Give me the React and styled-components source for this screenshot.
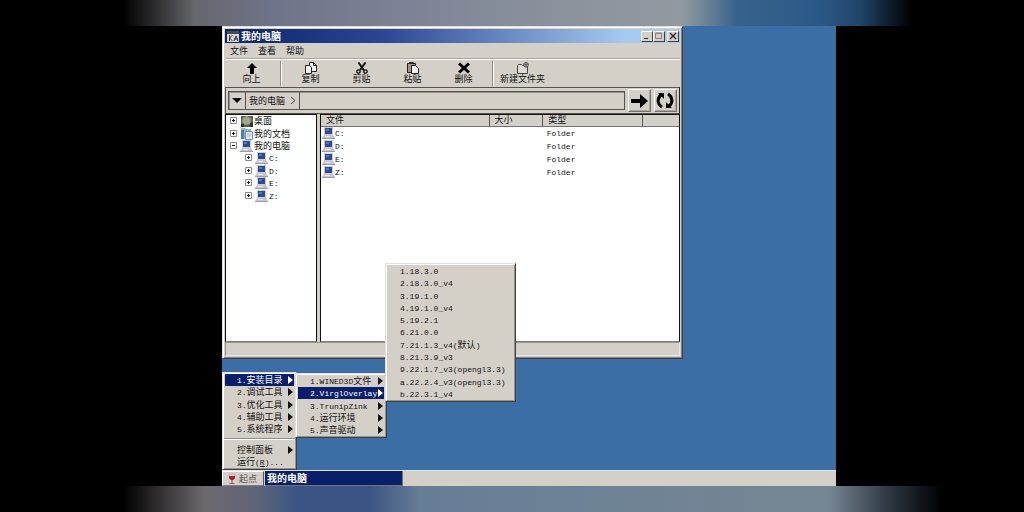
import React, { useState } from "react";
import styled, { createGlobalStyle } from "styled-components";

const GlobalStyle = createGlobalStyle`
  * {
    box-sizing: border-box;
  }
  body {
    margin: 0;
    background: #000;
    font-family: "Noto Sans CJK SC", sans-serif;
    font-size: 9px;
    line-height: 12px;
    color: #111;
  }
  button, input {
    font: inherit;
    color: inherit;
    margin: 0;
    padding: 0;
    border: 0;
    background: none;
    border-radius: 0;
  }
  svg {
    display: block;
    flex: none;
  }
`;

const face = "#d4d0c8";
const navy = "#0a1f6b";

const Page = styled.div`
  min-height: 100vh;
  display: grid;
  grid-template-rows: 26px 1fr 26px;
`;

const Band = styled.div`
  background: linear-gradient(90deg, ${(props) => props.$stops});
`;

const Stage = styled.div`
  display: grid;
  grid-template-columns: 222px 1fr 188px;
`;

const Desktop = styled.main`
  grid-column: 2;
  position: relative;
  background: #3a6ea5;
  display: flex;
  flex-direction: column;
  align-items: flex-start;
  justify-content: space-between;
`;

const Window = styled.section`
  width: 75%;
  min-height: 333px;
  display: flex;
  flex-direction: column;
  background: ${face};
  border: 1px solid;
  border-color: #e4e0d8 #404040 #404040 #e4e0d8;
  box-shadow: inset 1px 1px #fff, inset -1px -1px #808080;
  padding: 2px;
`;

const TitleBar = styled.header`
  height: 14px;
  display: flex;
  align-items: center;
  gap: 2px;
  padding: 0 1px 0 2px;
  background: linear-gradient(90deg, #0a246a, #2b4795 35%, #a6caf0 88%);
  color: #fff;
`;

const Title = styled.h1`
  flex: 1;
  margin: 0;
  font-size: 10px;
  line-height: 14px;
  font-weight: 700;
`;

const CaptionButton = styled.button`
  width: 12px;
  height: 11px;
  display: flex;
  align-items: center;
  justify-content: center;
  background: ${face};
  border: 1px solid;
  border-color: #fff #404040 #404040 #fff;
  margin-left: ${(props) => (props.$apart ? 0 : -2)}px;
`;

const MenuBar = styled.nav`
  height: 16px;
  display: flex;
  align-items: center;
  gap: 10px;
  padding-left: 5px;
  border-bottom: 1px solid #aaa69e;
`;

const MenuBarButton = styled.button`
  line-height: 14px;
`;

const ToolBar = styled.div`
  height: 28px;
  display: flex;
  border-top: 1px solid #fff;
  padding: 1px 0 0 1px;
`;

const ToolButton = styled.button`
  width: 51px;
  display: flex;
  flex-direction: column;
  align-items: center;
  justify-content: flex-start;
  padding-top: 1px;
  line-height: 10px;
  white-space: nowrap;
`;

const ToolDivider = styled.span`
  width: 2px;
  margin: 0 3px 1px;
  border-left: 1px solid #908c84;
  border-right: 1px solid #fff;
`;

const AddressBar = styled.form`
  height: 27px;
  display: flex;
  align-items: center;
  gap: 3px;
  padding: 0 2px;
  border: 1px solid #55534e;
  border-right-color: #222;
`;

const AddressBox = styled.div`
  flex: 1;
  height: 19px;
  display: flex;
  border: 1px solid #55534e;
  box-shadow: inset 1px 1px #96928a;
`;

const AddressPart = styled.button`
  display: flex;
  align-items: center;
  gap: 5px;
  padding: 0 3px;
  border-right: 1px solid #55534e;
`;

const AddressInput = styled.input`
  flex: 1;
  min-width: 0;
  outline: none;
`;

const GoButton = styled.button`
  width: 23px;
  height: 23px;
  display: flex;
  align-items: center;
  justify-content: center;
  border: 1px solid;
  border-color: #fff #77736c #77736c #fff;
  box-shadow: inset -1px -1px #aaa69e;
`;

const Panes = styled.div`
  flex: 1;
  display: grid;
  grid-template-columns: 92px 1fr;
  gap: 3px;
`;

const Pane = styled.div`
  background: #fff;
  border: 1px solid #111;
  border-bottom-color: #808080;
`;

const Tree = styled.ul`
  list-style: none;
  margin: 0;
  padding: 0;
  height: 87px;
  display: flex;
  flex-direction: column;
`;

const TreeRow = styled.li`
  flex: 1;
  display: flex;
  align-items: center;
  gap: 2px;
  padding-left: ${(props) => (props.$depth ? 19 : 4)}px;
`;

const TreeLabel = styled.span`
  margin-left: -1px;
  white-space: nowrap;
`;

const FileTable = styled.table`
  width: 100%;
  table-layout: fixed;
  border-collapse: collapse;

  th {
    height: 11px;
    padding: 0 0 0 5px;
    line-height: 10px;
    font-weight: 400;
    text-align: left;
    background: ${face};
    border-right: 1px solid #55534e;
    border-bottom: 1px solid #77736c;
  }
  th:last-child {
    border-right: 0;
  }
  td {
    height: 13px;
    padding: 0 0 0 4px;
  }
  td:first-child {
    padding-left: 1px;
  }
`;

const FileName = styled.span`
  display: flex;
  align-items: center;
`;

const StatusBar = styled.footer`
  height: 14px;
  border: 1px solid;
  border-color: #96928a #e8e5de #e8e5de #96928a;
`;

const Latin = styled.span`
  font-family: "Liberation Mono", monospace;
  font-size: 8px;
  line-height: 0;
  white-space: pre;
`;

const Menu = styled.div`
  position: absolute;
  left: ${(props) => props.$left}px;
  bottom: ${(props) => props.$bottom}px;
  width: ${(props) => props.$width}px;
  min-height: ${(props) => props.$height}px;
  display: flex;
  flex-direction: column;
  padding: 1px;
  background: ${face};
  border: 1px solid;
  border-color: #e4e0d8 #404040 #404040 #e4e0d8;
  box-shadow: inset 1px 1px #fff, inset -1px -1px #96928a;
`;

const MenuItem = styled.button`
  flex: 1;
  display: flex;
  align-items: center;
  justify-content: space-between;
  margin: 0 1px;
  padding: 0 1px 0 12px;
  white-space: nowrap;
  text-align: left;
  background: ${(props) => (props.$active ? navy : "transparent")};
  color: ${(props) => (props.$active ? "#fff" : "#111")};
`;

const MenuDivider = styled.hr`
  width: 100%;
  height: 2px;
  margin: 3px 0;
  border: 0;
  border-top: 1px solid #908c84;
  border-bottom: 1px solid #fff;
`;

const TaskBar = styled.footer`
  width: 100%;
  height: 16px;
  display: flex;
  gap: 1px;
  background: ${face};
  border-top: 1px solid #dfe6ea;
`;

const StartButton = styled.button`
  width: 42px;
  display: flex;
  align-items: center;
  gap: 3px;
  padding-left: 5px;
  color: #55534e;
  border: 1px solid;
  border-color: #fff #55534e #808080 #fff;
`;

const TaskButton = styled.button`
  width: 138px;
  padding-left: 2px;
  text-align: left;
  font-weight: 700;
  font-size: 10px;
  color: #fff;
  background: ${navy};
  border-right: 1px solid #77736c;
  border-bottom: 1px solid #77736c;
`;

// Latin runs are set in a half-width face beside the full-width characters
function Label({ text }) {
  return (
    <span>
      {text
        .split(/([\x20-\x7e]+)/)
        .filter(Boolean)
        .map((part, i) =>
          /^[\x20-\x7e]/.test(part) ? <Latin key={i}>{part}</Latin> : part
        )}
    </span>
  );
}

function ComputerIcon() {
  return (
    <svg width="13" height="12" viewBox="0 0 13 12">
      <path d="M2 0h9v8H2z" fill="#c9ced8" />
      <path d="M3 1h7v6H3z" fill="#2f4a94" />
      <path d="M4 2h3v2H4z" fill="#5878b8" />
      <path d="M2 8h9l2 3H0z" fill="#c3c6cc" />
      <path d="M0 11h13v1H0z" fill="#9a9ea8" />
      <path d="M3 9h5v1H3z" fill="#e8eaee" />
    </svg>
  );
}

function DesktopIcon() {
  return (
    <svg width="13" height="12" viewBox="0 0 13 12">
      <path d="M1 1h12v11H1z" fill="#5d6454" />
      <path d="M3 3l4-2 4 3-1 5-5 1-3-3z" fill="#a0a884" />
      <path d="M1 9h3v3H1zM10 8h3v4h-3z" fill="#30352c" />
    </svg>
  );
}

function DocumentsIcon() {
  return (
    <svg width="13" height="12" viewBox="0 0 13 12">
      <path d="M1 0h4l1 1h5v10H1z" fill="#8fb4d8" />
      <path d="M1 2h3v9H1z" fill="#4f7fb0" />
      <path d="M5.500 3.500h7v8h-7z" fill="#dfeafa" stroke="#6a8fb8" />
      <path d="M7 6h4M7 8h4" stroke="#9db8d6" />
    </svg>
  );
}

function Expander({ open }) {
  return (
    <svg width="8" height="8" viewBox="0 0 8 8">
      <path d="M.5.5h6v6h-6z" fill="#fff" stroke="#8a8a8a" />
      <path d={open ? "M2 3.500h3" : "M2 3.500h3M3.500 2v3"} stroke="#111" />
    </svg>
  );
}

function SubmenuArrow() {
  return (
    <svg width="5" height="8" viewBox="0 0 5 8">
      <path d="M0 0l5 4-5 4z" fill="currentColor" />
    </svg>
  );
}

const toolIcons = {
  up: <path d="M6 1l5 5H8v6H4V6H1z" fill="#000" />,
  copy: (
    <g fill="#f4f2ec" stroke="#222">
      <path d="M4.500.5h4l3 3v6h-7z" />
      <path d="M.5 3.500h4l2 2v6h-6z" />
      <path d="M8.500.5v3h3" fill="none" />
    </g>
  ),
  cut: (
    <g fill="none" stroke="#111">
      <path d="M2.500.5l5.500 8M9.500.5L4 8" strokeWidth="2" />
      <circle cx="2.500" cy="9.500" r="1.700" strokeWidth="1.300" />
      <circle cx="9.500" cy="9.500" r="1.700" strokeWidth="1.300" />
    </g>
  ),
  paste: (
    <g stroke="#222">
      <path d="M.5 1.500h8v9h-8z" fill="#9c988f" />
      <path d="M2.500.5h4v1h-4z" fill="#ddd" />
      <path d="M4.500 3.500h4l3 3v5h-7z" fill="#f4f2ec" />
    </g>
  ),
  remove: <path d="M1 1.500l10 9M11 1.500l-10 9" stroke="#000" strokeWidth="3" />,
  folder: (
    <g fill="none" stroke="#444">
      <path d="M.5 11.500v-8l1-1h3l1 1h5v8z" fill="#dedad2" />
      <circle cx="9" cy="2.800" r="2.300" fill="#dedad2" />
      <path d="M9 1.300v3M7.500 2.800h3" />
    </g>
  ),
};

function ToolIcon({ name }) {
  return (
    <svg width="12" height="12" viewBox="0 0 12 12">
      {toolIcons[name]}
    </svg>
  );
}

const drives = ["C:", "D:", "E:", "Z:"];

const tree = [
  { label: "桌面", icon: <DesktopIcon /> },
  { label: "我的文档", icon: <DocumentsIcon /> },
  { label: "我的电脑", icon: <ComputerIcon />, open: true },
  ...drives.map((label) => ({ label, icon: <ComputerIcon />, depth: 1 })),
];

const startItems = [
  "1.安装目录",
  "2.调试工具",
  "3.优化工具",
  "4.辅助工具",
  "5.系统程序",
];

const folderItems = [
  "1.WINED3D文件",
  "2.VirglOverlay",
  "3.TrunipZink",
  "4.运行环境",
  "5.声音驱动",
];

const versions = [
  "1.18.3.0",
  "2.18.3.0_v4",
  "3.19.1.0",
  "4.19.1.0_v4",
  "5.19.2.1",
  "6.21.0.0",
  "7.21.1.3_v4(默认)",
  "8.21.3.9_v3",
  "9.22.1.7_v3(opengl3.3)",
  "a.22.2.4_v3(opengl3.3)",
  "b.22.3.1_v4",
];

function Explorer() {
  const [address, setAddress] = useState("");

  return (
    <Window>
      <TitleBar>
        <svg width="12" height="12" viewBox="0 0 12 12">
          <path d="M0 1h12v11H0z" fill="#d8d8d4" />
          <path d="M0 1h12v3H0z" fill="#4a4a48" />
          <path d="M2.500 5v6M2.500 8l3-3M2.500 8l3 3M7 11l2-5 2 5M7 9h4" stroke="#333" fill="none" />
        </svg>
        <Title>我的电脑</Title>
        <CaptionButton aria-label="最小化">
          <svg width="8" height="8" viewBox="0 0 8 8">
            <path d="M1 6h4v1H1z" fill="#222" />
          </svg>
        </CaptionButton>
        <CaptionButton aria-label="最大化">
          <svg width="8" height="8" viewBox="0 0 8 8">
            <path d="M.5 1.500h6v5h-6zM.5 1h6" fill="none" stroke="#8a867e" />
          </svg>
        </CaptionButton>
        <CaptionButton aria-label="关闭" $apart>
          <svg width="8" height="8" viewBox="0 0 8 8">
            <path d="M1 1l6 6M7 1L1 7" stroke="#222" strokeWidth="1.300" />
          </svg>
        </CaptionButton>
      </TitleBar>
      <MenuBar>
        <MenuBarButton>文件</MenuBarButton>
        <MenuBarButton>查看</MenuBarButton>
        <MenuBarButton>帮助</MenuBarButton>
      </MenuBar>
      <ToolBar>
        <ToolButton><ToolIcon name="up" />向上</ToolButton>
        <ToolDivider />
        <ToolButton><ToolIcon name="copy" />复制</ToolButton>
        <ToolButton><ToolIcon name="cut" />剪贴</ToolButton>
        <ToolButton><ToolIcon name="paste" />粘贴</ToolButton>
        <ToolButton><ToolIcon name="remove" />删除</ToolButton>
        <ToolDivider />
        <ToolButton><ToolIcon name="folder" />新建文件夹</ToolButton>
      </ToolBar>
      <AddressBar onSubmit={(e) => e.preventDefault()}>
        <AddressBox>
          <AddressPart type="button" aria-label="历史">
            <svg width="10" height="5" viewBox="0 0 10 5">
              <path d="M0 0h10L5 5z" fill="#000" />
            </svg>
          </AddressPart>
          <AddressPart type="button">
            我的电脑
            <svg width="6" height="9" viewBox="0 0 6 9">
              <path d="M1 1l4 3.500L1 8" fill="none" stroke="#444" />
            </svg>
          </AddressPart>
          <AddressInput
            aria-label="地址"
            value={address}
            onChange={(e) => setAddress(e.target.value)}
          />
        </AddressBox>
        <GoButton aria-label="转到">
          <svg width="17" height="14" viewBox="0 0 17 14">
            <path d="M0 5h9V0l8 7-8 7V9H0z" fill="#000" />
          </svg>
        </GoButton>
        <GoButton type="button" aria-label="刷新">
          <svg width="18" height="17" viewBox="0 0 18 17">
            <path d="M6 15C1 12 1 6 5 3M12 2c5 3 5 9 1 12" fill="none" stroke="#000" strokeWidth="3" />
            <path d="M2 1h6v6zM16 16h-6v-6z" fill="#000" />
          </svg>
        </GoButton>
      </AddressBar>
      <Panes>
        <Pane>
          <Tree>
            {tree.map((node) => (
              <TreeRow key={node.label} $depth={node.depth}>
                <Expander open={node.open} />
                {node.icon}
                <TreeLabel><Label text={node.label} /></TreeLabel>
              </TreeRow>
            ))}
          </Tree>
        </Pane>
        <Pane>
          <FileTable>
            <colgroup>
              <col style={{ width: "47%" }} />
              <col style={{ width: "15%" }} />
              <col style={{ width: "28%" }} />
              <col />
            </colgroup>
            <thead>
              <tr>
                <th>文件</th>
                <th>大小</th>
                <th>类型</th>
                <th aria-label="修改日期"></th>
              </tr>
            </thead>
            <tbody>
              {drives.map((drive) => (
                <tr key={drive}>
                  <td>
                    <FileName><ComputerIcon /><Label text={drive} /></FileName>
                  </td>
                  <td></td>
                  <td><Label text="Folder" /></td>
                  <td></td>
                </tr>
              ))}
            </tbody>
          </FileTable>
        </Pane>
      </Panes>
      <StatusBar />
    </Window>
  );
}

export default function App() {
  return (
    <Page>
      <GlobalStyle />
      <Band $stops="#000 12%, #2a2a2c 15%, #66676c 19%, #70748a 27%, #878e9b 50%, #929a9f 66%, #8c979c 67%, #37628c 72%, #2a5886 80%, #1f4568 84%, #000 89%" />
      <Stage>
        <Desktop>
          <Explorer />
          <TaskBar>
            <StartButton>
              <svg width="8" height="12" viewBox="0 0 8 12">
                <path d="M1 1h6v3L5 7H3L1 4z" fill="#e4dcd8" stroke="#a09890" strokeWidth=".6" />
                <path d="M1 3h6v2L5 7H3L1 5z" fill="#b01830" />
                <path d="M3.500 7h1v3h2v1h-5v-1h2z" fill="#8a5560" />
              </svg>
              起点
            </StartButton>
            <TaskButton>我的电脑</TaskButton>
          </TaskBar>
          <Menu $left={0} $bottom={16} $width={75} $height={98}>
            {startItems.map((item, i) => (
              <MenuItem key={item} $active={i === 0}>
                <Label text={item} />
                <SubmenuArrow />
              </MenuItem>
            ))}
            <MenuDivider />
            <MenuItem>
              控制面板
              <SubmenuArrow />
            </MenuItem>
            <MenuItem>
              <span>运行<Latin>(<u>R</u>)...</Latin></span>
            </MenuItem>
          </Menu>
          <Menu $left={73} $bottom={48} $width={92} $height={65}>
            {folderItems.map((item, i) => (
              <MenuItem key={item} $active={i === 1}>
                <Label text={item} />
                <SubmenuArrow />
              </MenuItem>
            ))}
          </Menu>
          <Menu $left={163} $bottom={84} $width={131} $height={139}>
            {versions.map((item) => (
              <MenuItem key={item}>
                <Label text={item} />
              </MenuItem>
            ))}
          </Menu>
        </Desktop>
      </Stage>
      <Band $stops="#000 12%, #2a2829 15%, #6c696d 20%, #5f6478 25%, #3a5583 29%, #3a5583 36%, #667d96 41%, #6f8396 60%, #768592 81%, #2a3540 87%, #000 92%" />
    </Page>
  );
}
